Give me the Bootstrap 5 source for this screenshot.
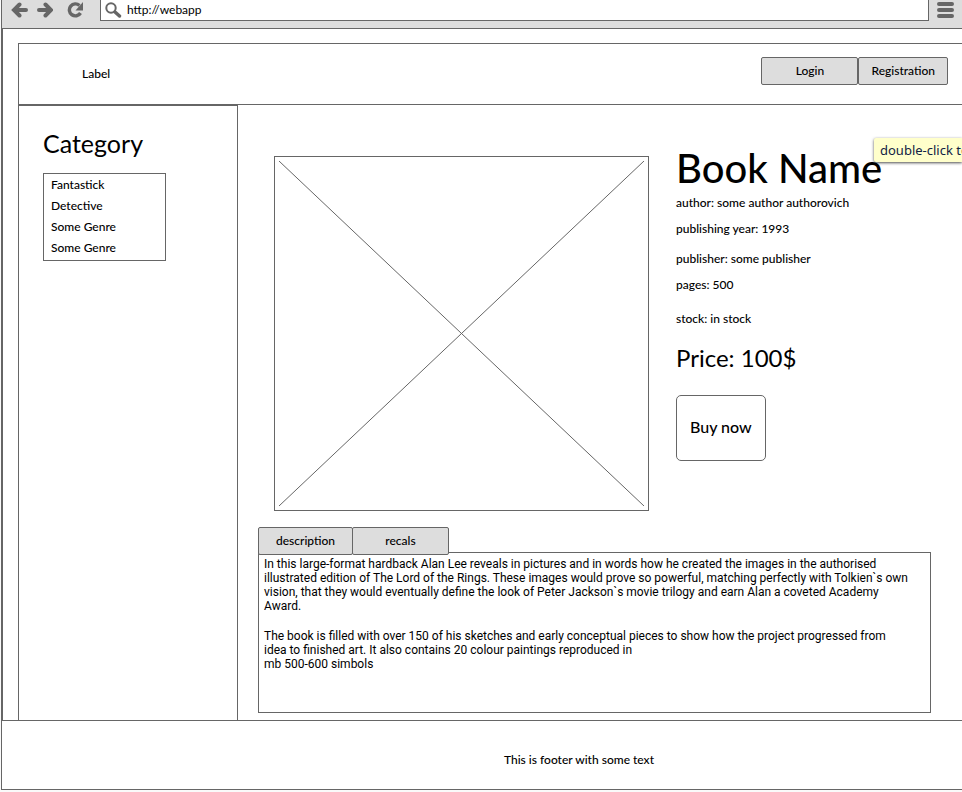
<!DOCTYPE html>
<html lang="en">
<head>
<meta charset="utf-8">
<meta name="viewport" content="width=device-width, initial-scale=1">
<title>Book Name</title>
<link href="https://cdn.jsdelivr.net/npm/bootstrap@5.3.0/dist/css/bootstrap.min.css" rel="stylesheet">
<style>
:root { --line: #666; --fill: #ddd; }
body { font: 500 12px/20px Lato, "Noto Sans", sans-serif; color: #000; background: #fafafa; overflow-x: hidden; }
.frame { margin-left: 1px; background: #fff; border-left: 1px solid var(--line); border-bottom: 1px solid var(--line); }
.view { border-left: 1px solid var(--line); }
.toolbar { height: 29px; background: var(--fill); border-bottom: 1px solid var(--line); padding: 0 7px 8px 9px; }
.toolbar button { line-height: 0; color: var(--line); }
.address { background: #fff; border: 1px solid var(--line); border-top: 0; height: 21px; margin: 0 7px 0 16px; padding: 0 5px 0 4px; }
.address input { font-size: 12px; line-height: 18px; color: #000; outline: 0; margin-left: 5px; }
.reload { margin-left: 14px; }
.site { margin: 14px 0 0 15px; border: 1px solid var(--line); border-width: 1px 0 0 1px; }
.site-head { height: 61px; border-bottom: 1px solid var(--line); padding: 0 14px 0 63px; }
.account { margin-bottom: 6px; }
.flat { font-size: 12px; line-height: 20px; font-weight: 500; color: #000; background: var(--fill); border: 1px solid var(--line); border-radius: 2px; padding: 3px 12px; }
.login { width: 97px; }
.side { width: 219px; border: 1px solid var(--line); border-width: 1px 1px 0 0; padding: 22px 24px 0; }
.side h2, .price { font-size: 24px; line-height: 30px; font-weight: 400; }
.side h2 { font-size: 25px; margin-bottom: 15px; }
.genres { width: 123px; border: 1px solid var(--line); padding: 0 7px 2px; line-height: 21px; }
.genres a { color: #000; text-decoration: none; }
.product { padding: 41px 31px 7px 20px; }
.cover { flex: 0 1 375px; margin: 10px 27px 0 16px; border: 1px solid var(--line); padding: 4px; height: 355px; }
.details h1 { font-size: 40px; line-height: 44px; font-weight: 500; margin-bottom: 3px; white-space: nowrap; }
.facts { display: grid; row-gap: 10px; }
.facts div + div { margin-top: 6px; }
.stock, .price { margin-top: 14px; }
.buy { font-size: 16px; line-height: 22px; font-weight: 500; color: #000; background: #fff; border: 1px solid var(--line); border-radius: 5px; padding: 20px 13px 22px; margin-top: 22px; }
.tabs-bar { margin: 16px 0 -3px; position: relative; }
.tabs-bar .flat { width: 95px; }
.tabs-bar .flat + .flat { width: 97px; margin-left: -1px; }
.blurb { min-height: 161px; border: 1px solid var(--line); padding: 4px 5px; font: 400 12px/14px Roboto, sans-serif; }
.foot { border-top: 1px solid var(--line); padding: 29px 0 19px 194px; }
.hint { position: absolute; top: 138px; left: 874px; right: 0; height: 24px; white-space: nowrap; padding: 0 0 0 6px; font: 13px/24px "Noto Sans", sans-serif; color: #124; background: #ffffcb; border-radius: 2px 0 0 2px; box-shadow: 0 1px 3px rgba(0,0,0,.7); }
</style>
</head>
<body>
<div class="frame">
  <div class="toolbar d-flex align-items-center">
    <button class="btn p-0 border-0 me-2" type="button" aria-label="Back"><svg width="17" height="16" viewBox="0 0 17 16" fill="none" stroke="currentColor" stroke-width="4" stroke-linecap="round"><path d="M5 8H15M8.500 2.500 3 8l5.500 5.500"/></svg></button>
    <button class="btn p-0 border-0" type="button" aria-label="Forward"><svg width="17" height="16" viewBox="0 0 17 16" fill="none" stroke="currentColor" stroke-width="4" stroke-linecap="round"><path d="M3 8H13M9.500 2.500 15 8l-5.500 5.500"/></svg></button>
    <button class="btn reload p-0 border-0" type="button" aria-label="Reload"><svg width="17" height="16" viewBox="0 0 17 16"><path d="M12.500 3.500A6 6 0 1 0 13.500 11" fill="none" stroke="currentColor" stroke-width="3.400"/><path d="M16 0v8.500H8.500z" fill="currentColor"/></svg></button>
    <div class="address d-flex align-items-center flex-grow-1 align-self-start">
      <svg width="17" height="16" viewBox="0 0 17 16" fill="none" stroke="#666"><circle cx="6" cy="6" r="4.700" stroke-width="2"/><path d="m10 10 4.500 4" stroke-width="3.400" stroke-linecap="round"/></svg>
      <input class="border-0 bg-transparent p-0 flex-grow-1" type="text" aria-label="Address" value="http://webapp">
    </div>
    <button class="btn p-0 border-0" type="button" aria-label="Menu"><svg width="19" height="16" viewBox="0 0 19 16" stroke="currentColor" stroke-width="4" stroke-linecap="round"><path d="M3 2H16M3 8H16M3 14H16"/></svg></button>
  </div>
  <div class="view overflow-hidden">
    <div class="site">
      <header class="site-head d-flex justify-content-between align-items-center">
        <span>Label</span>
        <div class="account d-flex">
          <button class="flat login" type="button">Login</button>
          <button class="flat" type="button">Registration</button>
        </div>
      </header>
      <div class="d-flex">
        <nav class="side flex-shrink-0" aria-label="Categories">
          <h2>Category</h2>
          <ul class="genres list-unstyled mb-0">
            <li><a href="#">Fantastick</a></li>
            <li><a href="#">Detective</a></li>
            <li><a href="#">Some Genre</a></li>
            <li><a href="#">Some Genre</a></li>
          </ul>
        </nav>
        <main class="product flex-grow-1">
          <div class="d-flex">
            <div class="cover">
              <svg class="d-block w-100 h-100" viewBox="0 0 365 345" preserveAspectRatio="none" stroke="#666" role="img" aria-label="Book cover"><path d="M0 0 365 345M365 0 0 345"/></svg>
            </div>
            <section class="details">
              <h1>Book Name</h1>
              <div class="facts">
                <section><div>author: some author authorovich</div><div>publishing year: 1993</div></section>
                <section><div>publisher: some publisher</div><div>pages: 500</div></section>
              </div>
              <div class="stock">stock: in stock</div>
              <div class="price">Price: 100$</div>
              <button class="buy" type="button">Buy now</button>
            </section>
          </div>
          <div class="tabs-bar d-flex" role="tablist">
            <button class="flat" type="button" role="tab" aria-selected="true">description</button>
            <button class="flat" type="button" role="tab" aria-selected="false">recals</button>
          </div>
          <div class="blurb">
            <p class="mb-3">In this large-format hardback Alan Lee reveals in pictures and in words how he created the images in the authorised<br>illustrated edition of The Lord of the Rings. These images would prove so powerful, matching perfectly with Tolkien`s own<br>vision, that they would eventually define the look of Peter Jackson`s movie trilogy and earn Alan a coveted Academy<br>Award.</p>
            <p class="mb-0">The book is filled with over 150 of his sketches and early conceptual pieces to show how the project progressed from<br>idea to finished art. It also contains 20 colour paintings reproduced in<br>mb 500-600 simbols</p>
          </div>
        </main>
      </div>
    </div>
  </div>
  <footer class="foot text-center">This is footer with some text</footer>
</div>
<div class="hint overflow-hidden" role="tooltip">double-click to</div>
</body>
</html>
